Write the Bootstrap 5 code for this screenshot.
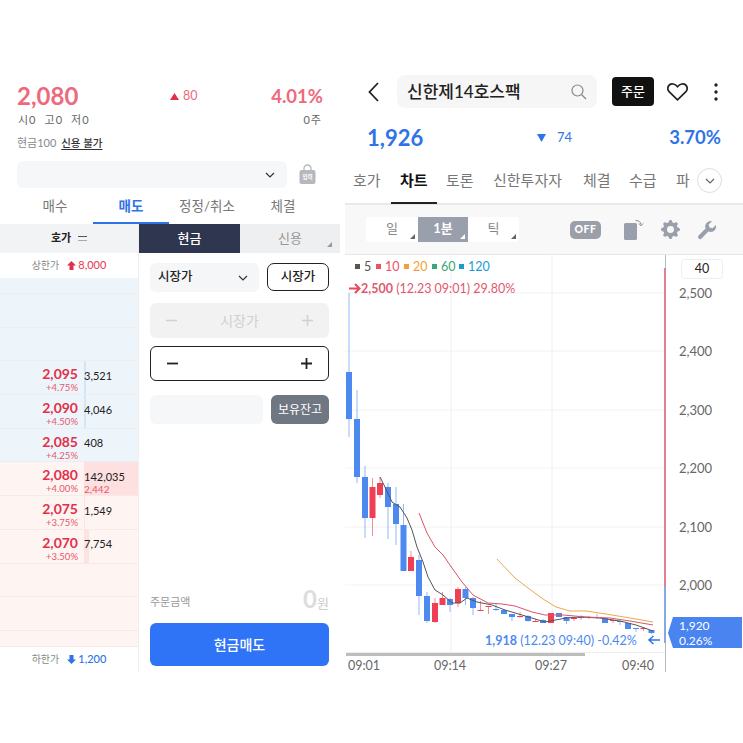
<!DOCTYPE html>
<html lang="ko">
<head>
    <meta charset="UTF-8">
    <meta name="viewport" content="width=device-width, initial-scale=1.0">
    <title>신한제14호스팩</title>
    <link href="https://cdn.jsdelivr.net/npm/bootstrap@5.3.0/dist/css/bootstrap.min.css" rel="stylesheet">
    <style>
        body { background: #fff; font-family: Lato, "Noto Sans CJK KR", sans-serif; color: #222; overflow: hidden; }
        .app-shell { margin-top: 75px; height: 597px; }
        .order-panel { width: 340px; margin-right: 5px; flex: none; box-shadow: 0 1px 0 #eee; }
        .chart-panel { width: 398px; flex: none; }

        /* left: quote header */
        .quote-row { margin-top: 9px; padding: 0 17px; height: 24px; line-height: 24px; color: #ee6a7a; }
        .quote-price { font-size: 24px; font-weight: 700; width: 153px; }
        .quote-diff { font-size: 12.5px; color: #ee6a7a; }
        .quote-rate { font-size: 18.5px; font-weight: 700; }
        .ohl-row { margin-top: 5px; padding: 0 18px; height: 14px; line-height: 14px; font-size: 11px; color: #666; letter-spacing: 1px; }
        .cash-row { margin-top: 9px; padding: 0 17px; height: 14px; line-height: 14px; font-size: 11px; color: #8a8a8a; }
        .cash-row u { color: #333; font-size: 10.5px; font-weight: 500; margin-left: 2px; text-underline-offset: 2px; }
        .acct-row { margin-top: 11px; padding: 0 17px; height: 27px; }
        .acct-select { width: 270px; background: #f6f7f8; border-radius: 6px; padding-right: 12px; }
        .bag-icon { margin-left: 12px; margin-top: 3px; }
        .order-tabs { margin-top: 3px; padding: 0 17px; height: 33px; }
        .order-tab { width: 76px; text-align: center; font-size: 13.5px; line-height: 31px; color: #777; }
        .order-tab.is-on { color: #2f74e6; font-weight: 700; border-bottom: 2px solid #2f74e6; }

        /* left: order book */
        .book-col { width: 139px; flex: none; border-right: 1px solid #eee; }
        .book-head { height: 29px; background: #f2f3f4; font-size: 11px; font-weight: 700; }
        .book-head i { display: block; width: 9px; height: 5px; margin-left: 7px; border-top: 1px solid #555; border-bottom: 1px solid #aaa; }
        .limit-row { height: 25px; font-size: 10px; color: #888; }
        .limit-row b { font-weight: 500; font-size: 11px; margin-left: 2px; }
        .limit-up { color: #e8485c; }
        .limit-down { color: #2f74e6; }
        .book-row { height: 33.7px; border-bottom: 1px solid #e9eef2; display: flex; }
        .book-row.stub { height: 16px; }
        .book-row.ask { background: #eef5fa; }
        .book-row.bid { background: #fef4f2; border-bottom-color: #f6e9e8; }
        .book-row.now .vol-cell { background: #fde0df; }
        .price-cell { width: 84px; padding: 5px 6px 0 0; text-align: right; color: #e0304a; flex: none; }
        .price-cell b { display: block; font-size: 14px; line-height: 15px; font-weight: 700; }
        .price-cell span { display: block; font-size: 9.5px; line-height: 13px; color: #e9566a; }
        .vol-cell { flex: 1; position: relative; font-size: 11px; line-height: 13px; padding-top: 7.5px; }
        .vol-cell em { font-style: normal; display: block; font-size: 10px; color: #e9566a; line-height: 12px; }
        .vol-bar { position: absolute; left: 0; top: 0; bottom: 0; }
        .vol-text { position: relative; }

        /* left: order form */
        .form-col { width: 201px; flex: none; }
        .kind-tabs { height: 29px; font-size: 13px; }
        .kind-on { width: 101px; background: #2e3650; color: #fff; font-weight: 500; }
        .kind-off { width: 100px; background: #eeeff0; color: #999; position: relative; }
        .corner-mark { position: absolute; right: 8px; bottom: 6px; width: 0; height: 0; border-left: 5px solid transparent; border-bottom: 5px solid #999; }
        .form-body { padding: 10px 11px 6px 11px; height: 419px; }
        .price-type { width: 109px; height: 29px; background: #f5f6f7; border-radius: 6px; font-size: 12.5px; font-weight: 500; padding: 0 11px 0 8px; }
        .market-btn { width: 62px; height: 28px; padding: 0; border: 1px solid #222; border-radius: 7px; font-size: 12.5px; font-weight: 500; line-height: 26px; color: #222; background: #fff; }
        .step-box { width: 179px; height: 35px; border-radius: 6px; padding: 0 16px; font-size: 14px; }
        .step-box.off { margin-top: 11px; background: #f2f2f3; color: #d0d0d0; }
        .step-box.on { margin-top: 8px; border: 1px solid #222; color: #222; }
        .qty-row { width: 179px; margin-top: 14px; }
        .qty-input { width: 113px; height: 29px; background: #f6f7f8; border-radius: 6px; }
        .hold-btn { width: 58px; height: 29px; padding: 0; background: #6f7782; border: 0; border-radius: 6px; color: #fff; font-size: 12px; line-height: 29px; }
        .amount-row { width: 179px; height: 24px; color: #999; font-size: 11px; }
        .amount-label { margin-bottom: 3px; }
        .amount-row b { font-size: 24px; line-height: 24px; color: #ddd; font-weight: 700; }
        .amount-row span.won { font-size: 13px; color: #ccc; }
        .sell-btn { width: 179px; height: 43px; margin-top: 10px; padding: 0; background: #2f74f6; border: 0; border-radius: 6px; color: #fff; font-size: 14px; font-weight: 500; }

        /* right: header */
        .top-bar { height: 33px; padding-left: 23px; }
        .search-box { width: 200px; height: 33px; margin-left: 18px; padding: 0 10px; background: #f6f6f6; border-radius: 8px; font-size: 17px; font-weight: 500; color: #222; }
        .order-btn { width: 42px; height: 29px; margin-left: 15px; padding: 0; background: #111; border: 0; border-radius: 4px; color: #fff; font-size: 13px; font-weight: 500; line-height: 29px; }
        .heart-icon { margin-left: 13px; }
        .dots-icon { margin-left: 26px; }
        .stock-row { margin-top: 17px; height: 25px; padding: 0 22px; line-height: 25px; color: #2f74e6; }
        .stock-price { font-size: 22px; font-weight: 700; width: 170px; }
        .stock-diff { font-size: 13px; }
        .stock-diff svg { margin-right: 11px; }
        .stock-rate { font-size: 18.5px; font-weight: 700; }
        .info-tabs { margin-top: 15px; height: 40px; border-bottom: 2px solid #e8e8e8; position: relative; font-size: 15px; color: #777; }
        .info-tab { position: absolute; top: 0; line-height: 30px; white-space: nowrap; }
        .info-tab.is-on { color: #111; font-weight: 700; }
        .tab-rule { position: absolute; left: 46px; top: 37px; width: 46px; height: 2px; background: #222; }
        .more-btn { position: absolute; left: 352px; top: 3px; width: 25px; height: 25px; border: 1px solid #ddd; border-radius: 50%; background: #fff; }
        .tool-bar { height: 50px; background: #f8f8f9; border-bottom: 1px solid #e6e6e6; padding: 0 24px 0 21px; }
        .seg-group { width: 153px; height: 25px; background: #fff; border-radius: 3px; font-size: 13px; color: #888; }
        .seg-item { height: 25px; position: relative; line-height: 23px; text-align: center; }
        .seg-item.w1 { width: 52px; }
        .seg-item.w2 { width: 50px; background: #9aa0ab; color: #fff; font-weight: 700; }
        .seg-item.w3 { width: 51px; }
        .seg-item .corner-mark { right: 3px; bottom: 3px; border-bottom-color: #666; }
        .seg-item.w2 .corner-mark { border-bottom-color: #fff; }
        .off-badge { width: 31px; height: 18px; margin-left: 51px; background: #9a9fa8; border-radius: 5px; color: #fff; font-size: 10.5px; font-weight: 900; letter-spacing: .5px; }
        .tool-icons { margin-left: 23px; gap: 17px; }
        .chart-box { width: 398px; height: 417px; display: block; }
        .chart-box text { font-family: Lato, "Noto Sans CJK KR", sans-serif; }
    </style>
</head>
<body>
<div class="app-shell d-flex">

    <!-- order side -->
    <section class="order-panel d-flex flex-column">
        <div class="quote-row d-flex align-items-center">
            <div class="quote-price">2,080</div>
            <div class="quote-diff d-flex align-items-center">
                <svg width="9" height="7" viewBox="0 0 9 7" class="me-1"><path d="M4.500 0 9 7H0z" fill="#e0304a"/></svg>80
            </div>
            <div class="quote-rate ms-auto">4.01%</div>
        </div>
        <div class="ohl-row d-flex">
            <span class="me-2">시0</span><span class="me-2">고0</span><span>저0</span>
            <span class="ms-auto">0주</span>
        </div>
        <div class="cash-row">현금100 <u>신용 불가</u></div>
        <div class="acct-row d-flex">
            <div class="acct-select d-flex align-items-center justify-content-end">
                <svg width="10" height="6" viewBox="0 0 10 6"><path d="M1 1l4 4 4-4" fill="none" stroke="#333" stroke-width="1.200"/></svg>
            </div>
            <svg class="bag-icon" width="17" height="20" viewBox="0 0 17 20">
                <path d="M5 6V4.500a3.500 3.500 0 0 1 7 0V6" fill="none" stroke="#b5b8bc" stroke-width="1.300"/>
                <rect x="0.500" y="6" width="16" height="14" rx="2" fill="#b5b8bc"/>
                <text x="8.500" y="15" font-size="5.500" font-weight="700" text-anchor="middle" fill="#fff">입력</text>
            </svg>
        </div>
        <div class="order-tabs d-flex">
            <div class="order-tab">매수</div>
            <div class="order-tab is-on">매도</div>
            <div class="order-tab">정정/취소</div>
            <div class="order-tab">체결</div>
        </div>

        <div class="d-flex flex-grow-1">
            <div class="book-col">
                <div class="book-head d-flex align-items-center justify-content-center">호가<i></i></div>
                <div class="limit-row d-flex align-items-center justify-content-center">상한가
                    <svg class="ms-2" width="9" height="9" viewBox="0 0 9 9"><path d="M4.500 0 9 4.500H6.500V9h-4V4.500H0z" fill="#e0304a"/></svg>
                    <b class="limit-up">8,000</b>
                </div>
                <div id="bookRows"></div>
                <div class="limit-row d-flex align-items-center justify-content-center">하한가
                    <svg class="ms-2" width="9" height="9" viewBox="0 0 9 9"><path d="M4.500 9 9 4.500H6.500V0h-4v4.500H0z" fill="#2f74e6"/></svg>
                    <b class="limit-down">1,200</b>
                </div>
            </div>

            <div class="form-col">
                <div class="kind-tabs d-flex">
                    <div class="kind-on d-flex align-items-center justify-content-center">현금</div>
                    <div class="kind-off d-flex align-items-center justify-content-center">신용<span class="corner-mark"></span></div>
                </div>
                <div class="form-body d-flex flex-column">
                    <div class="d-flex justify-content-between">
                        <div class="price-type d-flex align-items-center justify-content-between">시장가
                            <svg width="10" height="6" viewBox="0 0 10 6"><path d="M1 1l4 4 4-4" fill="none" stroke="#333" stroke-width="1.200"/></svg>
                        </div>
                        <button class="btn market-btn" type="button">시장가</button>
                    </div>
                    <div class="step-box off d-flex align-items-center justify-content-between">
                        <svg width="11" height="11" viewBox="0 0 11 11"><path d="M0 5.500h11" stroke="#d0d0d0" stroke-width="1.500"/></svg>
                        <span>시장가</span>
                        <svg width="11" height="11" viewBox="0 0 11 11"><path d="M0 5.500h11M5.500 0v11" stroke="#d0d0d0" stroke-width="1.500"/></svg>
                    </div>
                    <div class="step-box on d-flex align-items-center justify-content-between">
                        <svg width="11" height="11" viewBox="0 0 11 11"><path d="M0 5.500h11" stroke="#222" stroke-width="1.800"/></svg>
                        <svg width="11" height="11" viewBox="0 0 11 11"><path d="M0 5.500h11M5.500 0v11" stroke="#222" stroke-width="1.800"/></svg>
                    </div>
                    <div class="qty-row d-flex justify-content-between">
                        <div class="qty-input"></div>
                        <button class="btn hold-btn" type="button">보유잔고</button>
                    </div>
                    <div class="amount-row d-flex align-items-end justify-content-between mt-auto"><span class="amount-label">주문금액</span><div><b>0</b><span class="won">원</span></div></div>
                    <button class="btn sell-btn" type="button">현금매도</button>
                </div>
            </div>
        </div>
    </section>

    <!-- chart side -->
    <section class="chart-panel d-flex flex-column">
        <div class="top-bar d-flex align-items-center">
            <svg width="11" height="20" viewBox="0 0 11 20"><path d="M10 1 1.500 10 10 19" fill="none" stroke="#222" stroke-width="1.800"/></svg>
            <div class="search-box d-flex align-items-center justify-content-between">신한제14호스팩
                <svg width="16" height="16" viewBox="0 0 16 16"><circle cx="6.500" cy="6.500" r="5.500" fill="none" stroke="#888" stroke-width="1.200"/><path d="M10.500 10.500 15 15" stroke="#888" stroke-width="1.200"/></svg>
            </div>
            <button class="btn order-btn" type="button">주문</button>
            <svg class="heart-icon" width="21" height="18" viewBox="0 0 21 18"><path d="M10.500 16.800 2.300 8.900C.2 6.800.4 3.700 2.300 2 4.400.2 7.900.5 10.500 3.700 13.100.5 16.600.2 18.700 2c1.900 1.700 2.100 4.800 0 6.900z" fill="none" stroke="#222" stroke-width="1.700"/></svg>
            <svg class="dots-icon" width="4" height="18" viewBox="0 0 4 18"><circle cx="2" cy="2" r="1.700" fill="#222"/><circle cx="2" cy="9" r="1.700" fill="#222"/><circle cx="2" cy="16" r="1.700" fill="#222"/></svg>
        </div>
        <div class="stock-row d-flex align-items-center">
            <div class="stock-price">1,926</div>
            <div class="stock-diff d-flex align-items-center">
                <svg width="9" height="8" viewBox="0 0 9 8"><path d="M4.500 8 9 0H0z" fill="#2f74e6"/></svg>74
            </div>
            <div class="stock-rate ms-auto">3.70%</div>
        </div>
        <div class="info-tabs">
            <span class="info-tab" style="left:8px">호가</span>
            <span class="info-tab is-on" style="left:55px">차트</span>
            <span class="info-tab" style="left:101px">토론</span>
            <span class="info-tab" style="left:148px">신한투자자</span>
            <span class="info-tab" style="left:238px">체결</span>
            <span class="info-tab" style="left:284px">수급</span>
            <span class="info-tab" style="left:331px">파</span>
            <span class="tab-rule"></span>
            <span class="more-btn d-flex align-items-center justify-content-center">
                <svg width="10" height="6" viewBox="0 0 10 6"><path d="M1 1l4 4 4-4" fill="none" stroke="#666" stroke-width="1.200"/></svg>
            </span>
        </div>
        <div class="tool-bar d-flex align-items-center">
            <div class="seg-group d-flex">
                <div class="seg-item w1">일<span class="corner-mark"></span></div>
                <div class="seg-item w2">1분<span class="corner-mark"></span></div>
                <div class="seg-item w3">틱<span class="corner-mark"></span></div>
            </div>
            <div class="off-badge d-flex align-items-center justify-content-center">OFF</div>
            <div class="tool-icons d-flex align-items-center">
                <svg width="20" height="21" viewBox="0 0 20 21"><path d="M1.500 4h10a1.500 1.500 0 0 1 1.500 1.500V19.500a1.500 1.500 0 0 1-1.500 1.500h-10A1.500 1.500 0 0 1 0 19.500V5.500A1.500 1.500 0 0 1 1.500 4z" fill="#9aa0ab"/><path d="M11.500 1.500c3 0 5 1 5.500 4" fill="none" stroke="#888" stroke-width="1"/><path d="M15 4.500 17 6.800l2-2.300" fill="none" stroke="#888" stroke-width="1"/></svg>
                <svg width="19" height="19" viewBox="0 0 16 16"><path fill="#9aa0ab" fill-rule="evenodd" d="M9.405 1.05c-.413-1.4-2.397-1.4-2.81 0l-.1.34a1.464 1.464 0 0 1-2.105.872l-.31-.17c-1.283-.698-2.686.705-1.987 1.987l.169.311c.446.82.023 1.841-.872 2.105l-.34.1c-1.4.413-1.4 2.397 0 2.81l.34.1a1.464 1.464 0 0 1 .872 2.105l-.17.31c-.698 1.283.705 2.686 1.987 1.987l.311-.169a1.464 1.464 0 0 1 2.105.872l.1.34c.413 1.4 2.397 1.400 2.81 0l.1-.34a1.464 1.464 0 0 1 2.105-.872l.31.17c1.283.698 2.686-.705 1.987-1.987l-.169-.311a1.464 1.464 0 0 1 .872-2.105l.34-.1c1.4-.413 1.400-2.397 0-2.810l-.34-.1a1.464 1.464 0 0 1-.872-2.105l.17-.31c.698-1.283-.705-2.686-1.987-1.987l-.311.169a1.464 1.464 0 0 1-2.105-.872l-.1-.34zM8 10.930a2.929 2.929 0 1 1 0-5.860 2.929 2.929 0 0 1 0 5.860z"/></svg>
                <svg width="20" height="20" viewBox="0 0 20 20"><path fill="#9aa0ab" d="M13.500 1a5.500 5.500 0 0 0-5 7.600L1.600 15.500a2.100 2.100 0 0 0 3 3l6.800-6.900a5.500 5.500 0 0 0 7.400-6.600l-3.300 3.300-3-.8-.8-3L15 1.200A5.500 5.500 0 0 0 13.500 1z"/></svg>
            </div>
        </div>
        <svg id="chartSvg" class="chart-box" viewBox="345 255 398 417"></svg>
    </section>
</div>

<script>
    // order book rows: [price, rate, volume, second volume, bar width, side]
    const bookData = [
        [null, null, null, null, 0, "ask stub"],
        [null, null, null, null, 0, "ask"],
        [null, null, null, null, 0, "ask"],
        ["2,095", "+4.75%", "3,521", null, 2, "ask"],
        ["2,090", "+4.50%", "4,046", null, 2, "ask"],
        ["2,085", "+4.25%", "408", null, 0, "ask"],
        ["2,080", "+4.00%", "142,035", "2,442", 0, "bid now"],
        ["2,075", "+3.75%", "1,549", null, 1, "bid"],
        ["2,070", "+3.50%", "7,754", null, 5, "bid"],
        [null, null, null, null, 0, "bid"],
        [null, null, null, null, 0, "bid"],
        [null, null, null, null, 0, "bid stub"]
    ];

    const bookRows = document.getElementById("bookRows");
    bookData.forEach(r => {
        const row = document.createElement("div");
        row.className = "book-row " + r[5];
        if (r[0]) {
            const barColor = r[5].startsWith("ask") ? "#d3e6f5" : "#fbe3e1";
            row.innerHTML = `
                <div class="price-cell"><b>${r[0]}</b><span>${r[1]}</span></div>
                <div class="vol-cell">
                    <div class="vol-bar" style="width:${r[4]}px;background:${barColor}"></div>
                    <div class="vol-text">${r[2]}${r[3] ? `<em>${r[3]}</em>` : ""}</div>
                </div>`;
        }
        bookRows.appendChild(row);
    });

    // candles: [x, wick top, wick bottom, body top, body bottom, up?]
    const candles = [
        [349,293,437,372,419,0],[357,390,483,419,477,0],[365,466,538,477,518,0],[372.500,478,536,487,518,1],
        [380,477,498,483,495,1],[388,483,539,487,507,0],[396,487,545,504,524,0],[403.500,504,571,525,571,0],
        [411,551,571,557,571,1],[419,555,615,560,596,0],[427,592,623,596,621,0],[435,598,623,603,622,1],
        [442.500,592,605,598,605,1],[450,598,612,599,605,0],[458,587,607,589,603,1],[465.500,587,605,589,598,0],
        [473,597,615,598,608,0],[480.500,601,611,610,611,1],[488.500,606,614,606,607,1],[496,603,611,609,610,0],
        [504,610,614,610,614,0],[512,614,621,614,617,0],[520,612,618,616,617,1],[528,615,622,616,621,0],
        [535.500,619,622,621,622,1],[543,619,623,620,623,0],[551,613,623,613,623,1],[559,613,617,613,617,0],
        [566.500,617,624,617,621,0],[574,617,621,618,619,1],[581,615,620,617,618,0],[589,616,619,617,618,1],
        [597,614,619,617,618,0],[605,618,623,618,623,0],[613,620,623,620,621,1],[620,621,625,621,622,0],
        [628,623,629,623,629,0],[636,628,632,628,629,0],[643.500,628,631,628,629,1],[651.500,630,634,630,633,0]
    ];
    const lines = [
        ["#555", "380,477 384,485 392,502 400,507 407,518 412,530 417,547 423,562 428,577 435,590 443,595 452,603 460,603 467,598 477,602 492,605 505,610 522,615 545,622 566,618 580,617 600,618 620,621 636,625 653,631"],
        ["#d9566a", "419,513 427,533 435,547 443,555 452,568 462,582 473,595 488,603 502,604 515,606 532,612 545,615 563,615 586,617 610,618 630,621 653,625"],
        ["#e9a94f", "497,559 515,578 528,588 543,599 556,607 570,611 586,611 606,614 630,618 653,622"]
    ];

    let svg = "";
    [293, 351, 410, 468, 527, 585].forEach(y => svg += `<line x1="345" x2="664" y1="${y}" y2="${y}" stroke="#f1f2f3"/>`);
    [451, 552].forEach(x => svg += `<line x1="${x}" x2="${x}" y1="255" y2="652" stroke="#eff0f2"/>`);
    candles.forEach(c => {
        const col = c[5] ? "#ee3f55" : "#4d8af0";
        svg += `<line x1="${c[0]}" x2="${c[0]}" y1="${c[1]}" y2="${c[2]}" stroke="${col}" stroke-opacity=".6"/>`;
        svg += `<rect x="${c[0] - 3}" y="${c[3]}" width="6" height="${c[4] - c[3]}" fill="${col}"/>`;
    });
    lines.forEach(l => svg += `<polyline points="${l[1]}" fill="none" stroke="${l[0]}" stroke-width="1"/>`);

    // legend
    [[355, "#555", "5"], [376, "#ee4f66", "10"], [404, "#f5a033", "20"], [432, "#3aa876", "60"], [459, "#1a9ccf", "120"]].forEach(m => {
        svg += `<rect x="${m[0]}" y="264" width="5" height="5" fill="${m[1]}"/><text x="${m[0] + 9}" y="271" font-size="12.500" fill="${m[1]}">${m[2]}</text>`;
    });
    svg += `<path d="M349 288.500h10M355 284l4.500 4.500-4.500 4.500" fill="none" stroke="#e8485c" stroke-width="2"/>`;
    svg += `<text x="361" y="293" font-size="12.500" fill="#e05a6e"><tspan font-weight="700">2,500</tspan> (12.23 09:01) 29.80%</text>`;
    svg += `<text x="485" y="645" font-size="12.500" fill="#4d8af0"><tspan font-weight="700">1,918</tspan> (12.23 09:40) -0.42%</text>`;
    svg += `<path d="M660 640h-11M653.500 636l-4.500 4 4.500 4" fill="none" stroke="#2f74e6" stroke-width="1.500"/>`;

    // right axis
    svg += `<line x1="665.500" x2="665.500" y1="255" y2="268" stroke="#bbb"/>`;
    svg += `<rect x="664" y="268" width="2" height="318" fill="#e08090"/>`;
    svg += `<rect x="664" y="586" width="2" height="57" fill="#86a9e6"/>`;
    svg += `<line x1="665.500" x2="665.500" y1="643" y2="672" stroke="#bbb"/>`;
    svg += `<rect x="681.500" y="259.500" width="41" height="19" rx="3" fill="#fff" stroke="#eee"/>`;
    svg += `<text x="702" y="273" font-size="12.500" fill="#222" text-anchor="middle">40</text>`;
    [[293, "2,500"], [351, "2,400"], [410, "2,300"], [468, "2,200"], [527, "2,100"], [585, "2,000"]].forEach(a => {
        svg += `<text x="679" y="${a[0] + 5}" font-size="13" fill="#666">${a[1]}</text>`;
    });
    svg += `<path d="M673 617h69v31h-69l-5-15z" fill="#4a84f0"/>`;
    svg += `<text x="679" y="630" font-size="12" fill="#fff">1,920</text><text x="679" y="644.500" font-size="12" fill="#fff">0.26%</text>`;

    // time axis
    svg += `<rect x="345" y="652" width="320" height="1" fill="#eee"/><rect x="346" y="653" width="239" height="3" fill="#bdbdbd"/>`;
    [[348, "09:01"], [434, "09:14"], [535, "09:27"], [622, "09:40"]].forEach(t => {
        svg += `<text x="${t[0]}" y="670" font-size="12.500" fill="#666">${t[1]}</text>`;
    });
    document.getElementById("chartSvg").innerHTML = svg;
</script>
<script src="https://cdn.jsdelivr.net/npm/bootstrap@5.3.0/dist/js/bootstrap.bundle.min.js"></script>
</body>
</html>
